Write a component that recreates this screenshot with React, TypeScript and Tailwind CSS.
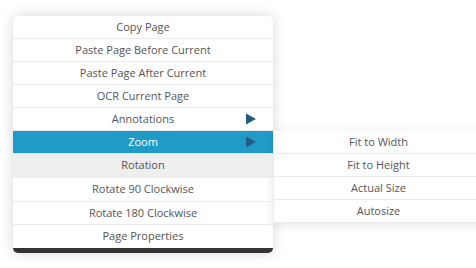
import React from 'react';

const items = [
  { label: 'Copy Page', h: 'h-[23px]' },
  { label: 'Paste Page Before Current', h: 'h-[23px]' },
  { label: 'Paste Page After Current', h: 'h-[23px]' },
  { label: 'OCR Current Page', h: 'h-[23px]' },
  { label: 'Annotations', h: 'h-[23px]', sub: true },
  { label: 'Zoom', h: 'h-[23px]', sub: true, active: true },
  { label: 'Rotation', h: 'h-[24px]', header: true },
  { label: 'Rotate 90 Clockwise', h: 'h-[24px]' },
  { label: 'Rotate 180 Clockwise', h: 'h-[23px]' },
  { label: 'Page Properties', h: 'h-[23px]' },
];

const zoomItems = ['Fit to Width', 'Fit to Height', 'Actual Size', 'Autosize'];

function Arrow() {
  return (
    <svg className="absolute right-[17px] top-1/2 -translate-y-1/2" width="10" height="11" viewBox="0 0 10 11">
      <path d="M0 0 L10 5.5 L0 11 Z" fill="#225d7f" />
    </svg>
  );
}

export default function App() {
  return (
    <div
      className="w-[476px] h-[268px] bg-white overflow-hidden pt-4 pl-[13px]"
      style={{ fontFamily: '"Open Sans", "Noto Sans", sans-serif' }}
    >
      <div className="relative w-[260px] rounded-[5px] bg-white border-b-[5px] border-[#333333] shadow-[0_0_14px_rgba(0,0,0,0.16)]">
        {items.map((item, i) => (
          <div
            key={item.label}
            className={`relative ${item.h} flex items-center justify-center text-[11px] ${
              i < items.length - 1 ? 'border-b border-[#ebebeb]' : ''
            } ${i === 0 ? 'rounded-t-[5px]' : ''} ${
              item.active
                ? 'bg-[#209bc8] text-white border-[#209bc8]'
                : item.header
                ? 'bg-[#eeeeee] text-[#555555]'
                : 'text-[#555555]'
            }`}
          >
            {item.label}
            {item.sub && <Arrow />}
            {item.active && (
              <div className="absolute left-[260px] top-0 w-[210px] bg-white border-l border-[#ebebeb] shadow-[0_2px_10px_rgba(0,0,0,0.1)]">
                {zoomItems.map((z) => (
                  <div
                    key={z}
                    className="h-[23px] flex items-center justify-center border-b border-[#ebebeb] text-[11px] text-[#555555]"
                  >
                    {z}
                  </div>
                ))}
              </div>
            )}
          </div>
        ))}
      </div>
    </div>
  );
}
